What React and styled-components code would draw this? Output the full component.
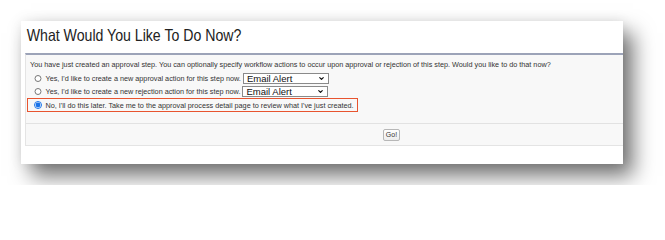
import React, { useState } from 'react';
import styled, { createGlobalStyle } from 'styled-components';
import { ChevronDown } from 'lucide-react';

const GlobalStyle = createGlobalStyle`
  * {
    box-sizing: border-box;
  }
  body {
    margin: 0;
    background: #fff;
    font-family: 'Liberation Sans', Arial, sans-serif;
    color: #222;
  }
`;

const Page = styled.div`
  padding: 21px;
`;

const Card = styled.div`
  width: 602px;
  height: 143px;
  background: #fff;
  box-shadow: 10px 12px 20px rgba(0, 0, 0, 0.55), 0 0 12px rgba(0, 0, 0, 0.08);
  padding-left: 4px;
  display: flex;
  flex-direction: column;
`;

// the screenshot is squeezed sideways, so the heading is too
const Title = styled.h2`
  margin: 0;
  padding: 5px 0 0 2px;
  font-size: 16.5px;
  font-weight: normal;
  line-height: 19px;
  color: #222;
  height: 32px;
  transform: scaleX(0.856);
  transform-origin: left center;
`;

const Panel = styled.div`
  background: #f8f8f8;
  border-top: 2px solid #9ca3b8;
  border-left: 1px solid #e4e4e4;
  border-bottom: 1px solid #e4e4e4;
  height: 93px;
  display: flex;
  flex-direction: column;
`;

const Body = styled.div`
  flex: 1;
  padding: 4px 0 0 4px;
  font-size: 7.25px;
  color: #333;
`;

const Intro = styled.div`
  line-height: 10px;
  height: 13px;
  padding-top: 1px;
`;

const Row = styled.label`
  display: ${(p) => (p.$highlight ? 'inline-flex' : 'flex')};
  align-items: center;
  height: ${(p) => (p.$highlight ? '14px' : '13px')};
  margin-left: -3px;
  padding: 0 3px 0 6px;
  border: 1.5px solid ${(p) => (p.$highlight ? '#e8542f' : 'transparent')};
  cursor: pointer;
`;

const Radio = styled.input`
  width: 7.5px;
  height: 7.5px;
  margin: 0 4px 0 0;
  accent-color: #1a73e8;
`;

const SelectWrap = styled.span`
  position: relative;
  display: inline-flex;
  margin-left: 2px;
`;

const Select = styled.select`
  appearance: none;
  width: 86px;
  height: 11px;
  padding: 0 0 0 3px;
  border: 1px solid #8a8a8a;
  background: #fff;
  font-family: 'Liberation Sans', Arial, sans-serif;
  font-size: 9.5px;
  line-height: 9px;
  color: #111;
  border-radius: 0;
  overflow: hidden;
`;

const Chevron = styled(ChevronDown)`
  position: absolute;
  right: 4px;
  top: 2px;
  pointer-events: none;
  color: #111;
`;

const ButtonBar = styled.div`
  height: 22px;
  border-top: 1px solid #e2e2e2;
  display: flex;
  align-items: center;
  padding-left: 357px;
`;

const GoButton = styled.button`
  width: 17px;
  height: 12px;
  padding: 0;
  border: 1px solid #b7b7b7;
  border-radius: 2px;
  background: linear-gradient(#ffffff, #ededed);
  font-family: 'Liberation Sans', Arial, sans-serif;
  font-size: 7px;
  color: #333;
  line-height: 10px;
`;

const options = ['Email Alert', 'Field Update', 'Task', 'Outbound Message'];

function ActionSelect() {
  return (
    <SelectWrap>
      <Select defaultValue="Email Alert">
        {options.map((o) => (
          <option key={o}>{o}</option>
        ))}
      </Select>
      <Chevron size={7} strokeWidth={4} />
    </SelectWrap>
  );
}

export default function App() {
  const [choice, setChoice] = useState('none');

  return (
    <>
      <GlobalStyle />
      <Page>
        <Card>
          <Title>What Would You Like To Do Now?</Title>
          <Panel>
            <Body>
              <Intro>
                You have just created an approval step. You can optionally specify workflow actions to occur upon approval or rejection of this step. Would you like to do that now?
              </Intro>
              <Row>
                <Radio type="radio" name="next" checked={choice === 'approval'} onChange={() => setChoice('approval')} />
                Yes, I'd like to create a new approval action for this step now.
                <ActionSelect />
              </Row>
              <Row>
                <Radio type="radio" name="next" checked={choice === 'rejection'} onChange={() => setChoice('rejection')} />
                Yes, I'd like to create a new rejection action for this step now.
                <ActionSelect />
              </Row>
              <Row $highlight>
                <Radio type="radio" name="next" checked={choice === 'none'} onChange={() => setChoice('none')} />
                No, I'll do this later. Take me to the approval process detail page to review what I've just created.
              </Row>
            </Body>
            <ButtonBar>
              <GoButton type="button">Go!</GoButton>
            </ButtonBar>
          </Panel>
        </Card>
      </Page>
    </>
  );
}
